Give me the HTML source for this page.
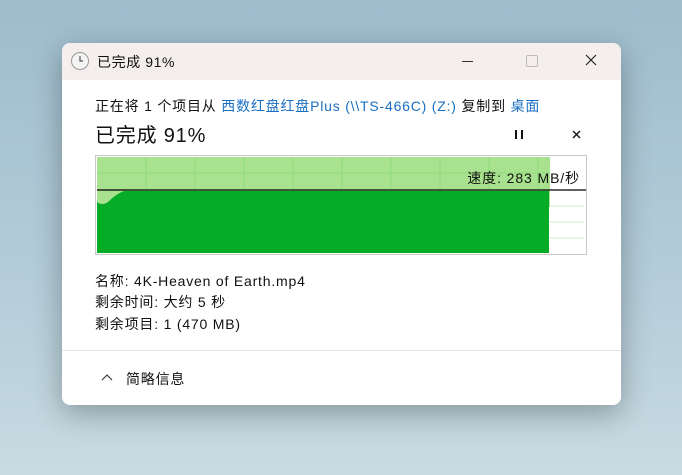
<!DOCTYPE html><html><head><meta charset="utf-8"><style>
body{margin:0;width:682px;height:475px;overflow:hidden;background:linear-gradient(180deg,#9fbccd 0%,#b4cdd9 60%,#c8dbe2 100%);font-family:"Liberation Sans","Noto Sans CJK SC",sans-serif;position:relative}
.win{position:absolute;left:62px;top:43px;width:559px;height:362px;background:#fff;border-radius:8px;overflow:hidden;box-shadow:0 8px 30px rgba(0,0,0,.3)}
.tb{height:37px;background:#f4efed;position:relative}
.t{position:absolute;font-size:14px;letter-spacing:0.8px;color:#111;white-space:nowrap}
.b{color:#1a6fc4}
.g{position:absolute;left:33px;top:112px;width:490px;height:98px;border:1px solid #c8c8c8;background:#fff}
.sep{position:absolute;left:0;top:307px;width:559px;height:1px;background:#e2e2e2}
</style></head><body>
<div class="win">
<div class="tb">
<svg style="position:absolute;left:8px;top:8px" width="20" height="20"><circle cx="10" cy="10" r="8.5" fill="#f4f4f4" stroke="#999"/><path d="M10 5v5h3" stroke="#555" fill="none" stroke-width="1.2"/></svg>
<div class="t" style="left:35px;top:9px;letter-spacing:0.6px">已完成 91%</div>
<div style="position:absolute;left:400px;top:18px;width:11px;height:1px;background:#333"></div>
<div style="position:absolute;left:464px;top:12px;width:10px;height:10px;border:1px solid #bbb;border-radius:2px"></div>
<svg style="position:absolute;left:523px;top:11px" width="12" height="12"><path d="M1 1L11 11M11 1L1 11" stroke="#222" stroke-width="1.2"/></svg>
</div>
<div class="t" style="left:33px;top:53px">正在将 1 个项目从 <span class="b">西数红盘红盘Plus (\\TS-466C) (Z:)</span> 复制到 <span class="b">桌面</span></div>
<div class="t" style="left:33px;top:76px;font-size:20px;letter-spacing:0.8px">已完成 91%</div>
<div style="position:absolute;left:453px;top:87px;width:2px;height:9px;background:#111"></div>
<div style="position:absolute;left:459px;top:87px;width:2px;height:9px;background:#111"></div>
<svg style="position:absolute;left:510px;top:87px" width="9" height="9"><path d="M1 1L8 8M8 1L1 8" stroke="#111" stroke-width="1.4"/></svg>
<div class="g">
<svg width="490" height="98" style="position:absolute;left:0;top:0">
<rect x="1" y="1" width="453" height="50" fill="#a8e28f"/>
<g stroke="#8fd97a" stroke-width="1"><path d="M50 1v33M99 1v33M148 1v33M197 1v33M246 1v33M295 1v33M344 1v33M393 1v33M442 1v33M1 17h453"/></g>
<g stroke="#c8edc6"><path d="M454 50h34M454 66h34M454 82h34"/></g>
<path d="M1 46 Q6 50 12 46 Q20 38 28 35 L453 35 L453 97 L1 97Z" fill="#05ad26"/>
<path d="M1 34h489" stroke="#000" stroke-width="1.3"/>
<text x="484" y="27" text-anchor="end" font-size="14" letter-spacing="0.9" font-family="Liberation Sans,Noto Sans CJK SC,sans-serif" fill="#111">速度: 283 MB/秒</text>
</svg></div>
<div class="t" style="left:33px;top:228px">名称: 4K-Heaven of Earth.mp4</div>
<div class="t" style="left:33px;top:249px">剩余时间: 大约 5 秒</div>
<div class="t" style="left:33px;top:271px">剩余项目: 1 (470 MB)</div>
<div class="sep"></div>
<svg style="position:absolute;left:39px;top:330px" width="12" height="8"><path d="M1 7L6 2L11 7" stroke="#333" fill="none" stroke-width="1.1"/></svg>
<div class="t" style="left:64px;top:326px">简略信息</div>
</div>
</body></html>
